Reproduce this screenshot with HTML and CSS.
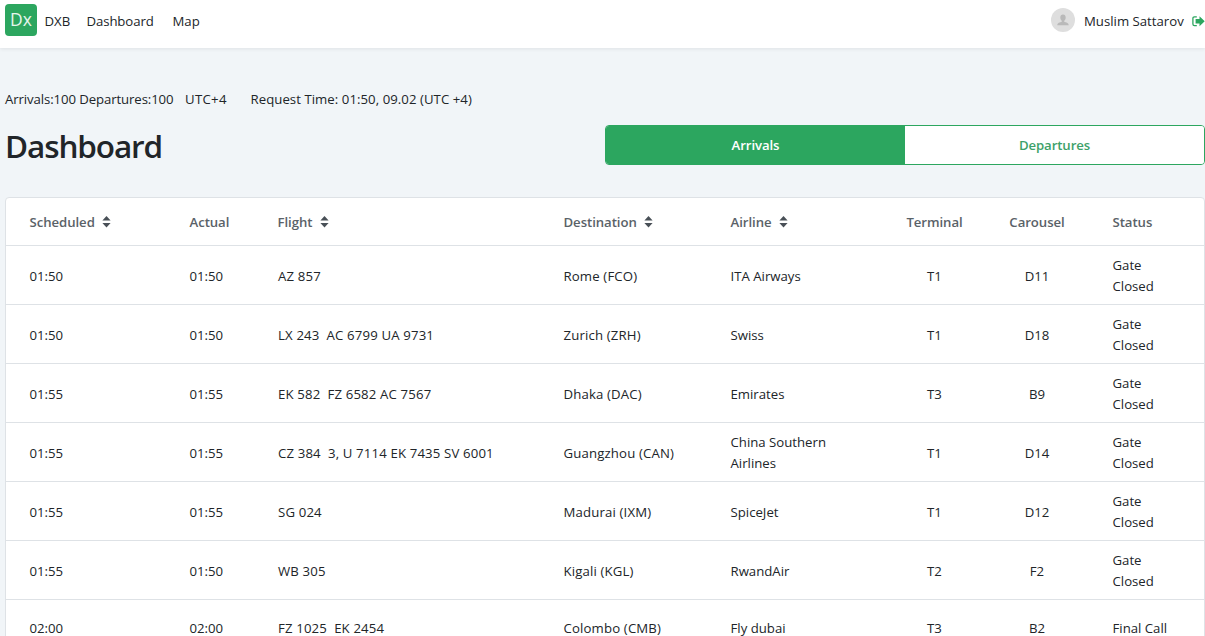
FILE: index.html
```html
<!DOCTYPE html>
<html lang="en">

<head>
    <meta charset="UTF-8">
    <meta name="viewport" content="width=device-width, initial-scale=1.0">
    <title>DXB - Dashboard</title>
    <link rel="stylesheet" href="styles.css">
</head>

<body>
    <svg class="sprite" width="0" height="0">
        <symbol id="sort" viewBox="0 0 9 12">
            <path d="M4.5 0L8.6 4.6H.4zM4.5 11.6L8.6 7H.4z" />
        </symbol>
    </svg>

    <header class="navbar">
        <a class="logo" href="#">Dx</a>
        <nav class="menu">
            <a class="menu-dxb" href="#">DXB</a>
            <a class="menu-dashboard" href="#">Dashboard</a>
            <a class="menu-map" href="#">Map</a>
        </nav>
        <div class="user">
            <span class="avatar">
                <svg width="12" height="12" viewBox="0 0 12 12">
                    <path d="M6 .5C4.3 .5 3.3 1.7 3.3 3.4C3.3 4.900 4 6 4.800 6.700V7.800C3 8.400 .3 8.800 .3 11.300H11.700C11.700 8.800 9 8.400 7.200 7.800V6.700C8 6 8.700 4.900 8.700 3.400C8.700 1.700 7.700 .5 6 .5z" />
                </svg>
            </span>
            <span class="user-name">Muslim Sattarov</span>
            <a class="logout" href="#">
                <svg width="13" height="11" viewBox="0 0 13 11">
                    <path class="door" d="M4.800 .9H2.500Q.9 .9 .9 2.500V8Q.9 9.600 2.500 9.600H4.800" />
                    <path d="M7.500 .3L12.700 5.300L7.500 10.300V7.500H3.600V3.100H7.500z" />
                </svg>
            </a>
        </div>
    </header>

    <main>
        <div class="info">
            <span class="info-count">Arrivals:100 Departures:100</span>
            <span class="info-zone">UTC+4</span>
            <span class="info-time">Request Time: 01:50, 09.02 (UTC +4)</span>
        </div>

        <div class="heading">
            <h1>Dashboard</h1>
            <div class="tabs">
                <button class="tab active">Arrivals</button>
                <button class="tab">Departures</button>
            </div>
        </div>

        <div class="card">
            <table>
                <colgroup>
                    <col class="col-scheduled">
                    <col class="col-actual">
                    <col class="col-flight">
                    <col class="col-destination">
                    <col class="col-airline">
                    <col class="col-terminal">
                    <col class="col-carousel">
                    <col>
                </colgroup>
                <thead>
                    <tr>
                        <th>Scheduled<svg class="sort"><use href="#sort" /></svg></th>
                        <th>Actual</th>
                        <th>Flight<svg class="sort"><use href="#sort" /></svg></th>
                        <th>Destination<svg class="sort"><use href="#sort" /></svg></th>
                        <th>Airline<svg class="sort"><use href="#sort" /></svg></th>
                        <th class="center">Terminal</th>
                        <th class="center">Carousel</th>
                        <th>Status</th>
                    </tr>
                </thead>
                <tbody>
                    <tr>
                        <td>01:50</td>
                        <td>01:50</td>
                        <td class="flight">AZ 857</td>
                        <td class="destination">Rome (FCO)</td>
                        <td>ITA Airways</td>
                        <td class="center">T1</td>
                        <td class="center">D11</td>
                        <td>Gate Closed</td>
                    </tr>
                    <tr>
                        <td>01:50</td>
                        <td>01:50</td>
                        <td class="flight">LX 243&nbsp; AC 6799 UA 9731</td>
                        <td class="destination">Zurich (ZRH)</td>
                        <td>Swiss</td>
                        <td class="center">T1</td>
                        <td class="center">D18</td>
                        <td>Gate Closed</td>
                    </tr>
                    <tr>
                        <td>01:55</td>
                        <td>01:55</td>
                        <td class="flight">EK 582&nbsp; FZ 6582 AC 7567</td>
                        <td class="destination">Dhaka (DAC)</td>
                        <td>Emirates</td>
                        <td class="center">T3</td>
                        <td class="center">B9</td>
                        <td>Gate Closed</td>
                    </tr>
                    <tr>
                        <td>01:55</td>
                        <td>01:55</td>
                        <td class="flight">CZ 384&nbsp; 3, U 7114 EK 7435 SV 6001</td>
                        <td class="destination">Guangzhou (CAN)</td>
                        <td>China Southern Airlines</td>
                        <td class="center">T1</td>
                        <td class="center">D14</td>
                        <td>Gate Closed</td>
                    </tr>
                    <tr>
                        <td>01:55</td>
                        <td>01:55</td>
                        <td class="flight">SG 024</td>
                        <td class="destination">Madurai (IXM)</td>
                        <td>SpiceJet</td>
                        <td class="center">T1</td>
                        <td class="center">D12</td>
                        <td>Gate Closed</td>
                    </tr>
                    <tr>
                        <td>01:55</td>
                        <td>01:50</td>
                        <td class="flight">WB 305</td>
                        <td class="destination">Kigali (KGL)</td>
                        <td>RwandAir</td>
                        <td class="center">T2</td>
                        <td class="center">F2</td>
                        <td>Gate Closed</td>
                    </tr>
                    <tr>
                        <td>02:00</td>
                        <td>02:00</td>
                        <td class="flight">FZ 1025&nbsp; EK 2454</td>
                        <td class="destination">Colombo (CMB)</td>
                        <td>Fly dubai</td>
                        <td class="center">T3</td>
                        <td class="center">B2</td>
                        <td>Final Call</td>
                    </tr>
                </tbody>
            </table>
        </div>
    </main>
</body>

</html>
```
FILE: styles.css
```css
* {
    box-sizing: border-box;
}

body {
    margin: 0;
    height: 100vh;
    overflow: hidden;
    background: #f1f5f8;
    color: #212529;
    font-family: "Segoe UI", "Open Sans", sans-serif;
    font-size: 13.2px;
    line-height: 21px;
}

a {
    color: inherit;
    text-decoration: none;
}

.sprite {
    position: absolute;
}

.navbar {
    display: flex;
    align-items: flex-start;
    height: 48px;
    padding: 4px 0 0 5px;
    background: #fff;
    box-shadow: 0 1px 4px rgba(0, 0, 0, 0.08);
}

.logo {
    width: 32px;
    height: 32px;
    border-radius: 4px;
    background: #2ca65f;
    color: #e6f5ec;
    font-size: 17.5px;
    line-height: 30px;
    text-align: center;
}

.menu {
    display: flex;
    padding: 7px 0 0 7.5px;
}

.menu-dxb {
    width: 42px;
}

.menu-dashboard {
    width: 86px;
    letter-spacing: -0.1px;
}

.user {
    display: flex;
    margin-left: auto;
    padding-top: 4px;
}

.avatar {
    display: flex;
    align-items: center;
    justify-content: center;
    width: 24px;
    height: 24px;
    margin-right: 9px;
    border-radius: 50%;
    background: #dedede;
    fill: #b9b9b9;
}

.user-name {
    width: 108px;
    padding-top: 3px;
    white-space: nowrap;
}

.logout {
    display: flex;
    padding-top: 8px;
    fill: #2ca65f;
}

.door {
    fill: none;
    stroke: #2ca65f;
    stroke-width: 1.3;
}

main {
    padding: 41px 0 0 5px;
}

.info {
    display: flex;
    white-space: nowrap;
}

.info-count {
    width: 180px;
    letter-spacing: -0.1px;
}

.info-zone {
    width: 65.5px;
    letter-spacing: 0.3px;
}

.info-time {
    letter-spacing: 0.05px;
}

.heading {
    display: flex;
    justify-content: space-between;
    margin-top: 15px;
}

h1 {
    margin: 0;
    font-size: 31.5px;
    font-weight: 600;
    line-height: 41px;
    letter-spacing: -1.1px;
}

.tabs {
    display: flex;
    width: 600px;
    height: 40px;
    border: 1px solid #2ca65f;
    border-radius: 4px;
    overflow: hidden;
}

.tab {
    flex: 1;
    padding: 0;
    border: 0;
    background: #fff;
    color: #3da169;
    font: inherit;
    font-weight: 600;
    letter-spacing: -0.1px;
    cursor: pointer;
}

.tab.active {
    background: #2ca65f;
    color: #fff;
}

.card {
    margin-top: 31px;
    border: 1px solid #dee2e6;
    border-radius: 4px;
    background: #fff;
}

table {
    width: 100%;
    table-layout: fixed;
    border-collapse: separate;
    border-spacing: 0;
}

.col-scheduled {
    width: 176px;
}

.col-actual {
    width: 88px;
}

.col-flight {
    width: 286px;
}

.col-destination {
    width: 167px;
}

.col-airline {
    width: 149px;
}

.col-terminal {
    width: 125px;
}

.col-carousel {
    width: 80px;
}

th,
td {
    height: 56px;
    padding: 9px 8px 7px 7.5px;
    border-bottom: 1px solid #dee2e6;
    text-align: left;
    vertical-align: middle;
}

th {
    height: 48px;
    padding-bottom: 8px;
    color: #5a6268;
    font-weight: 600;
    letter-spacing: -0.06px;
    white-space: nowrap;
}

th:first-child,
td:first-child {
    padding-left: 23.5px;
}

th:last-child,
td:last-child {
    padding-left: 35.5px;
    padding-right: 24px;
}

.flight {
    padding-left: 8px;
    letter-spacing: 0.15px;
}

.destination {
    letter-spacing: 0.15px;
}

th.center,
td.center {
    padding-left: 0;
    padding-right: 0;
    text-align: center;
}

.sort {
    width: 9px;
    height: 12px;
    margin-left: 7.5px;
    vertical-align: -1px;
    fill: #495057;
}
```
